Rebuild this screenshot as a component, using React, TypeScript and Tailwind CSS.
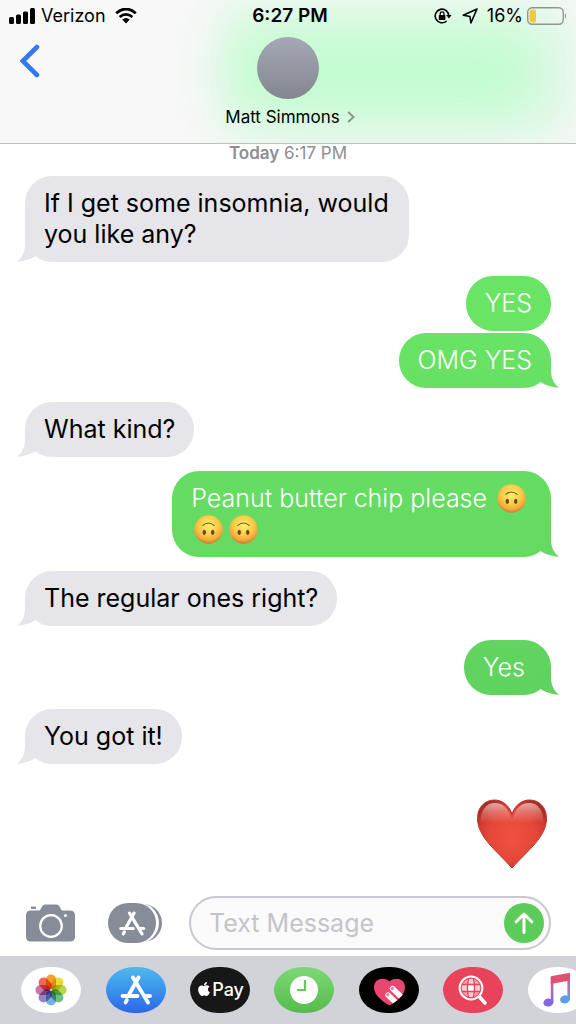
import React from "react";
import { FaApple } from "react-icons/fa";

type Sender = "me" | "them";

interface Message {
  sender: Sender;
  content: React.ReactNode;
  tail?: boolean;
  // background + matching tail color
  bg?: string;
  tailColor?: string;
  spacing?: string;
}

function UpsideDownFace() {
  return (
    <svg
      role="img"
      aria-label="upside-down face"
      viewBox="0 0 29 29"
      className="mx-[3px] inline-block size-[29px] align-[-6px]"
    >
      <defs>
        <radialGradient id="face" cx="0.5" cy="0.36" r="0.64">
          <stop offset="0" stopColor="#fdee72" />
          <stop offset="0.5" stopColor="#fbcf4a" />
          <stop offset="0.8" stopColor="#f3a93c" />
          <stop offset="1" stopColor="#cf7a2e" />
        </radialGradient>
      </defs>
      <circle cx="14.5" cy="14.5" r="14.2" fill="url(#face)" />
      <path d="M8.8 10.4Q14.5 5.6 20.2 10.4" fill="none" stroke="#79501a" strokeWidth="1.1" strokeLinecap="round" />
      <ellipse cx="10.3" cy="17.3" rx="1.7" ry="2.6" fill="#6d4616" />
      <ellipse cx="18.7" cy="17.3" rx="1.7" ry="2.6" fill="#6d4616" />
    </svg>
  );
}

const messages: Message[] = [
  { sender: "them", content: "If I get some insomnia, would you like any?", tail: true },
  {
    sender: "me",
    content: "YES",
    bg: "bg-[#6ae465]",
    spacing: "mt-[14px]",
  },
  {
    sender: "me",
    content: "OMG YES",
    tail: true,
    bg: "bg-linear-to-b from-[#69e365] to-[#67e063]",
    tailColor: "text-[#67e063]",
    spacing: "mt-[2px]",
  },
  { sender: "them", content: "What kind?", tail: true, spacing: "mt-[14px]" },
  {
    sender: "me",
    content: (
      <>
        Peanut butter chip please <UpsideDownFace />
        <UpsideDownFace />
        <UpsideDownFace />
      </>
    ),
    tail: true,
    bg: "bg-linear-to-b from-[#65dd62] to-[#66d962]",
    tailColor: "text-[#66d962]",
    spacing: "mt-[14px]",
  },
  { sender: "them", content: "The regular ones right?", tail: true, spacing: "mt-[14px]" },
  {
    sender: "me",
    content: "Yes\u00a0",
    tail: true,
    bg: "bg-linear-to-b from-[#62d560] to-[#60d25f]",
    tailColor: "text-[#60d25f]",
    spacing: "mt-[14px]",
  },
  { sender: "them", content: "You got it!", tail: true, spacing: "mt-[14px]" },
];

function Bubble({ message }: { message: Message }) {
  const mine = message.sender === "me";
  return (
    <li className={`flex ${mine ? "justify-end" : "justify-start"} ${message.spacing ?? ""}`}>
      <div
        className={`relative rounded-[27px] px-[19px] py-3 text-[25px] leading-[31px] ${
          mine
            ? `max-w-[72%] font-light text-white ${message.bg}`
            : "max-w-[73%] bg-[#e5e5ea] text-black"
        }`}
      >
        {message.content}
        {message.tail && (
          <svg
            viewBox="0 0 20 30"
            className={`absolute bottom-0 h-[30px] w-5 ${
              mine ? `-right-2 -scale-x-100 ${message.tailColor}` : "-left-2 text-[#e5e5ea]"
            }`}
          >
            <path d="M8 3V14Q7.500 24 0 29.800Q10 29 18 24.500L20 8Z" fill="currentColor" />
          </svg>
        )}
      </div>
    </li>
  );
}

function StatusBar() {
  return (
    <div className="flex h-8 items-center px-[9px] text-[18px] leading-[22px]">
      <div className="flex flex-1 items-center">
        <svg viewBox="0 0 26 16" className="h-4 w-[26px]">
          <rect x="0" y="9" width="5" height="7" rx="1.5" />
          <rect x="7" y="6.500" width="5" height="9.500" rx="1.5" />
          <rect x="14" y="3.500" width="5" height="12.500" rx="1.5" />
          <rect x="21" y="0" width="5" height="16" rx="1.5" />
        </svg>
        <span className="ml-[6px]">Verizon</span>
        <svg viewBox="0 0 22 16" className="ml-[9px] h-4 w-[22px]">
          <path d="M1.200 5.200Q11-3.200 20.800 5.200" fill="none" stroke="black" strokeWidth="2.800" />
          <path d="M4.600 9Q11 3.600 17.400 9" fill="none" stroke="black" strokeWidth="2.600" />
          <path d="M7.200 11.600Q11 8.400 14.800 11.600L11 15.600Z" />
        </svg>
      </div>
      <span className="pl-1 text-[19px] font-semibold">6:27 PM</span>
      <div className="flex flex-1 items-center justify-end">
        {/* rotation lock */}
        <svg viewBox="0 0 18 16" className="h-4 w-[18px]">
          <path d="M14.800 8A6.800 6.800 0 1 0 12.600 13" fill="none" stroke="black" strokeWidth="1.600" />
          <path d="M12.200 6.900H17.600L14.900 10.600Z" />
          <rect x="4.800" y="7" width="6.600" height="5" rx="0.800" />
          <path d="M6.200 7.200V5.800a1.900 1.900 0 0 1 3.800 0V7.200" fill="none" stroke="black" strokeWidth="1.200" />
        </svg>
        {/* location */}
        <svg viewBox="0 0 16 16" className="ml-2.5 size-4">
          <path d="M15 1L1.200 7.200L8 8.500L8.900 15Z" fill="none" stroke="black" strokeWidth="1.600" strokeLinejoin="round" />
        </svg>
        <span className="ml-[9px]">16%</span>
        <svg viewBox="0 0 40 18" className="ml-1 h-[18px] w-10">
          <rect x="0.700" y="0.700" width="35.600" height="16.600" rx="4.500" fill="none" stroke="#8f9690" strokeWidth="1.400" />
          <rect x="2.600" y="2.600" width="6.400" height="12.800" rx="2" fill="#f7c73c" />
          <path d="M38 6Q40.200 9 38 12Z" fill="#8f9690" />
        </svg>
      </div>
    </div>
  );
}

function Header() {
  return (
    <header className="relative overflow-hidden border-b border-[#bdc1be] bg-[#f8f8f8]">
      {/* message color bleeding through the bar */}
      <div className="absolute top-0 right-0 bottom-0 left-[37%] rounded-[40px] bg-[#dcf9e3] blur-[20px]" />
      <div className="absolute top-8 right-[7%] bottom-8 left-[41%] rounded-[40px] bg-[#c3fcd0] blur-[18px]" />
      <div className="relative">
        <StatusBar />
        <div className="grid grid-cols-[1fr_auto_1fr] pb-[15px]">
          <button aria-label="Back" className="h-[58px] w-[60px] pl-5">
            <svg viewBox="0 0 20 34" className="h-[34px] w-5">
              <path d="M17 3L2.800 17L17 31" fill="none" stroke="#3478f0" strokeWidth="4.600" strokeLinecap="round" strokeLinejoin="miter" />
            </svg>
          </button>
          <button className="flex flex-col items-center pt-[5px]">
            <span className="size-[62px] rounded-full bg-linear-to-b from-[#a5a8b6] to-[#84868e]" />
            <span className="mt-[7px] flex items-center gap-[7px] pl-1 text-[17px] leading-[22px]">
              Matt Simmons
              <svg viewBox="0 0 8 12" className="h-3 w-2">
                <path d="M1.200 1L6.500 6L1.200 11" fill="none" stroke="#8b938e" strokeWidth="2" />
              </svg>
            </span>
          </button>
        </div>
      </div>
    </header>
  );
}

function HeartSticker() {
  return (
    <svg role="img" aria-label="red heart" viewBox="0 0 70 70" className="size-[70px]">
      <defs>
        <radialGradient id="heart" cx="0.5" cy="0.55" r="0.6">
          <stop offset="0" stopColor="#f0513f" />
          <stop offset="0.55" stopColor="#e54838" />
          <stop offset="0.85" stopColor="#cf3a2f" />
          <stop offset="1" stopColor="#a82d26" />
        </radialGradient>
        <linearGradient id="shine" gradientUnits="userSpaceOnUse" x1="0" y1="3" x2="0" y2="24">
          <stop offset="0" stopColor="#fff" stopOpacity="0.6" />
          <stop offset="0.5" stopColor="#fff" stopOpacity="0.25" />
          <stop offset="1" stopColor="#fff" stopOpacity="0" />
        </linearGradient>
      </defs>
      <path
        d="M35 15C32 6 25 1 17.500 1C8 1 0.500 8 0.500 19.500C0.500 38 20 52 35 69C50 52 69.500 38 69.500 19.500C69.500 8 62 1 52.500 1C45 1 38 6 35 15Z"
        fill="url(#heart)"
        stroke="#b4352c"
        strokeWidth="1"
      />
      <path
        d="M35 20C31 9 26 4 18 4C9 4 3.500 11 3.500 24H66.500C66.500 11 61 4 52 4C44 4 39 9 35 20Z"
        fill="url(#shine)"
      />
    </svg>
  );
}

function AppStoreGlyph({ className }: { className: string }) {
  return (
    <svg viewBox="0 0 32 30" className={className} fill="none" stroke="white" strokeWidth="3.800" strokeLinecap="round">
      <path d="M18.500 2.500L9 19.500M6.800 25L5.600 27.500M13 2.500L28 27.500" />
      <path d="M2.500 21H17.500M25.500 21H30" />
    </svg>
  );
}

function Composer() {
  return (
    <form className="flex items-center pr-[25px] pb-1.5 pl-[26px]" onSubmit={(e) => e.preventDefault()}>
      <button type="button" aria-label="Camera">
        <svg viewBox="0 0 49 38" className="h-[38px] w-[49px]">
          <path
            d="M5 6.500H13C15 6.500 15.500 1 18.500 0.500H31C34 1 34.500 6.500 36.500 6.500H44Q49 6.500 49 11.500V32.500Q49 37.500 44 37.500H5Q0 37.500 0 32.500V11.500Q0 6.500 5 6.500Z"
            fill="#878d98"
          />
          <path d="M5 3.800H10" stroke="#878d98" strokeWidth="2.400" />
          <circle cx="25" cy="22" r="10.800" fill="none" stroke="white" strokeWidth="2.200" />
          <circle cx="39.500" cy="11.500" r="1.600" fill="white" />
        </svg>
      </button>
      <button type="button" aria-label="Apps" className="relative ml-[33px] flex h-10 w-[54px] items-center pl-[10px]">
        <svg viewBox="0 0 54 40" className="absolute inset-0 h-10 w-[54px]">
          <rect x="6" y="1" width="48" height="38" rx="19" fill="#878d98" />
          <rect x="0" y="0" width="51" height="40" rx="20" fill="white" />
          <rect x="0" y="0" width="48" height="40" rx="20" fill="#878d98" />
        </svg>
        <AppStoreGlyph className="relative h-[25px] w-[28px]" />
      </button>
      <div className="ml-[27px] flex h-[54px] min-w-0 flex-1 items-center rounded-full border-2 border-[#c9c8d0] bg-[#fafafa] pr-[5px] pl-[18px]">
        <input
          type="text"
          aria-label="Text Message"
          placeholder="Text Message"
          className="min-w-0 flex-1 bg-transparent text-[25px] leading-[31px] outline-none placeholder:text-[#c4c4c9]"
        />
        <button aria-label="Send" className="flex size-10 items-center justify-center rounded-full bg-[#5bcb59]">
          <svg viewBox="0 0 20 22" className="h-[22px] w-5">
            <path d="M10 20.500V2.500M2.200 9.800L10 2L17.800 9.800" fill="none" stroke="white" strokeWidth="3" strokeLinecap="round" strokeLinejoin="round" />
          </svg>
        </button>
      </div>
    </form>
  );
}

const petals = ["#f7a12b", "#e8dc34", "#b4d553", "#6cbf86", "#7aaee0", "#9087c4", "#cd74ae", "#ee6a55"];

function PhotosIcon() {
  return (
    <svg viewBox="0 0 60 45" className="size-full">
      {petals.map((color, i) => (
        <rect
          key={color}
          x="25"
          y="7"
          width="10"
          height="14.800"
          rx="5"
          fill={color}
          transform={`rotate(${i * 45} 30 22.500)`}
          className="mix-blend-multiply"
        />
      ))}
    </svg>
  );
}

function ClockIcon() {
  return (
    <svg viewBox="0 0 60 45" className="size-full">
      <circle cx="30" cy="22.500" r="14" fill="white" />
      <path d="M31 12.500V22.500H23" fill="none" stroke="#66c95c" strokeWidth="2.200" />
    </svg>
  );
}

function DigitalTouchIcon() {
  return (
    <svg viewBox="0 0 60 45" className="size-full">
      <defs>
        <clipPath id="touch">
          <path d="M30.500 14C27 9.500 15 9.500 15 20C15 28 24 34 30.500 38C37 34 46 28 46 20C46 9.500 34 9.500 30.500 14Z" />
        </clipPath>
      </defs>
      <g clipPath="url(#touch)">
        <rect x="14" y="9" width="33" height="30" fill="#ea4672" />
        <path d="M29 27.500L40 38M33.500 21L46 33" stroke="white" strokeWidth="5.400" strokeLinecap="round" />
        <circle cx="28.800" cy="27.200" r="1.600" fill="#f07f9d" />
        <circle cx="33.400" cy="20.900" r="1.600" fill="#f07f9d" />
      </g>
    </svg>
  );
}

function ImagesIcon() {
  return (
    <svg viewBox="0 0 60 45" className="size-full" fill="none" stroke="white">
      <defs>
        <clipPath id="globe">
          <circle cx="28" cy="20.500" r="10" />
        </clipPath>
      </defs>
      <g clipPath="url(#globe)" stroke="none">
        <rect x="17" y="9" width="22" height="23" fill="#f4a3ad" />
        <path d="M24.500 9H31.500V17H24.500ZM17 17H24.500V24H17ZM31.500 17H39V24H31.500ZM24.500 24H31.500V32H24.500Z" fill="#f9cdd2" />
        <rect x="24.500" y="17" width="7" height="7" fill="white" />
      </g>
      <path d="M18 17H38M18 24H38M25.500 11Q23.500 20.500 25.500 30M30.500 11Q32.500 20.500 30.500 30" stroke="#e8435a" strokeWidth="1.300" />
      <circle cx="28" cy="20.500" r="9.800" stroke="#e8435a" strokeWidth="1" />
      <circle cx="28" cy="20.500" r="11.400" strokeWidth="2" />
      <path d="M36.500 29.500L42 35.500" strokeWidth="3.600" strokeLinecap="round" />
    </svg>
  );
}

function MusicIcon() {
  return (
    <svg viewBox="0 0 60 45" className="size-full">
      <defs>
        <linearGradient id="noteLeft" gradientUnits="userSpaceOnUse" x1="0" y1="8" x2="0" y2="38">
          <stop offset="0" stopColor="#e8486d" />
          <stop offset="0.500" stopColor="#b765b8" />
          <stop offset="1" stopColor="#7468f2" />
        </linearGradient>
        <linearGradient id="noteRight" gradientUnits="userSpaceOnUse" x1="0" y1="6" x2="0" y2="35">
          <stop offset="0" stopColor="#e8486d" />
          <stop offset="0.500" stopColor="#a178cf" />
          <stop offset="1" stopColor="#4fa4f4" />
        </linearGradient>
      </defs>
      <rect x="22.800" y="9.500" width="2.600" height="26" fill="url(#noteLeft)" />
      <ellipse cx="20.400" cy="35" rx="5" ry="4" transform="rotate(-14 20.400 35)" fill="url(#noteLeft)" />
      <rect x="39.400" y="6" width="2.600" height="26" fill="url(#noteRight)" />
      <ellipse cx="37" cy="31.800" rx="5" ry="4" transform="rotate(-14 37 31.800)" fill="url(#noteRight)" />
      <path d="M22.800 9.500Q22.800 8.800 24 8.600L41 5.500Q42 5.400 42 6.200V13L22.800 16.500Z" fill="#e2506f" />
    </svg>
  );
}

const apps = [
  { name: "Photos", bg: "bg-white", icon: <PhotosIcon /> },
  {
    name: "App Store",
    bg: "bg-linear-to-b from-[#4fb9ee] to-[#2f66e6]",
    icon: <AppStoreGlyph className="h-[30px] w-8" />,
  },
  {
    name: "Apple Pay",
    bg: "bg-[#181717]",
    icon: (
      <span className="flex items-center text-[18px] leading-[22px] font-medium text-white">
        <FaApple className="mb-[2px] size-4" />
        Pay
      </span>
    ),
  },
  { name: "Recents", bg: "bg-linear-to-b from-[#7cd977] to-[#56bb4b]", icon: <ClockIcon /> },
  { name: "Digital Touch", bg: "bg-black", icon: <DigitalTouchIcon /> },
  { name: "Images", bg: "bg-[#e8435a]", icon: <ImagesIcon /> },
  { name: "Music", bg: "bg-white", icon: <MusicIcon /> },
];

function AppDrawer() {
  return (
    <nav aria-label="Apps" className="overflow-hidden bg-[#d1d3d9] py-[11px]">
      <div className="-mr-6 grid grid-cols-7 justify-items-center pl-[9px]">
        {apps.map((app) => (
          <button
            key={app.name}
            aria-label={app.name}
            className={`isolate flex h-[46px] w-[60px] items-center justify-center overflow-hidden rounded-[28px/23px] ${app.bg}`}
          >
            {app.icon}
          </button>
        ))}
      </div>
    </nav>
  );
}

export default function App() {
  return (
    <div className="flex min-h-screen flex-col bg-white font-['Inter','Noto_Sans',sans-serif] text-black">
      <Header />
      <main className="flex-1 px-[25px]">
        <p className="pb-[13px] text-center text-[17px] leading-[19px] text-[#8e8e93]">
          <span className="font-semibold">Today</span> 6:17 PM
        </p>
        <ul>
          {messages.map((message, i) => (
            <Bubble key={i} message={message} />
          ))}
        </ul>
        <div className="mt-[35px] flex justify-end pr-1">
          <HeartSticker />
        </div>
      </main>
      <Composer />
      <AppDrawer />
    </div>
  );
}
